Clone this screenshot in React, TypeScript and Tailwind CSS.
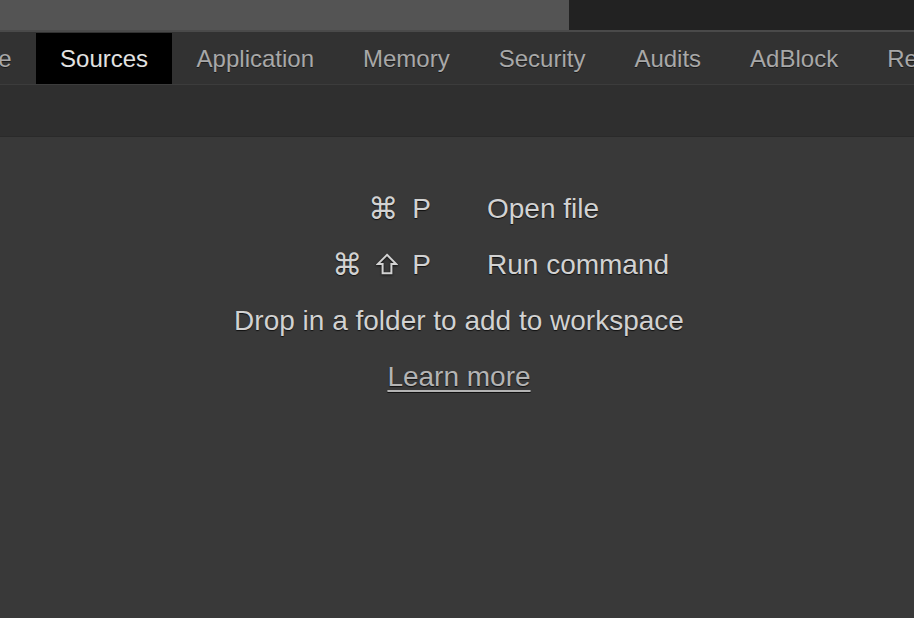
const TABS = ["Console", "Sources", "Application", "Memory", "Security", "Audits", "AdBlock", "Recorder"];

function ShiftIcon() {
  return (
    <svg width="22" height="22" viewBox="0 0 22 22" className="mb-[2px] [filter:drop-shadow(0_1px_1px_#111)]">
      <path
        d="M11 1.8 L20.2 11 H15.4 V20.2 H6.6 V11 H1.8 Z"
        fill="none"
        stroke="currentColor"
        strokeWidth="2"
        strokeLinejoin="miter"
      />
    </svg>
  );
}

function Shortcut({ keys }: { keys: string[] }) {
  return (
    <span className="flex justify-end items-center gap-[14px]">
      {keys.map((k, i) =>
        k === "shift" ? (
          <ShiftIcon key={i} />
        ) : k === "P" ? (
          <span key={i}>{k}</span>
        ) : (
          <span key={i} className="font-['DejaVu_Sans',sans-serif] text-[30px] leading-none">
            {k}
          </span>
        )
      )}
    </span>
  );
}

export default function App() {
  return (
    <div
      className="w-[914px] h-[618px] overflow-hidden flex flex-col bg-[#393939]"
      style={{ fontFamily: '"Liberation Sans", Arial, sans-serif' }}
    >
      {/* window strip */}
      <div className="h-[30px] flex shrink-0">
        <div className="w-[569px] bg-[#545454]" />
        <div className="flex-1 bg-[#222222]" />
      </div>

      {/* tab bar */}
      <div className="h-[55px] shrink-0 border-t-2 border-[#4a4a4a] border-b border-b-[#3c3c3c] bg-[#323232] overflow-hidden text-[24px]">
        <div className="flex h-full -ml-[101px] pt-px">
          {TABS.map((t) => (
            <div
              key={t}
              className={
                t === "Sources"
                  ? "shrink-0 h-full flex items-center px-[24px] bg-black text-[#e2e2e2] [text-shadow:0_1px_0_#000]"
                  : "shrink-0 h-full flex items-center px-[24.5px] text-[#a8a8a8] [text-shadow:0_1px_0_#1a1a1a]"
              }
            >
              {t}
            </div>
          ))}
        </div>
      </div>

      {/* toolbar */}
      <div className="h-[52px] shrink-0 bg-[#2f2f2f] border-b border-[#2a2a2a]" />

      {/* empty editor placeholder */}
      <div className="flex-1 flex flex-col items-center pt-[44px] pl-[4px] text-[28px] text-[#d2d2d2] leading-[56px] [text-shadow:0_1px_1px_#111]">
        <div className="grid grid-cols-2 gap-x-[56px] w-[640px]">
          <Shortcut keys={["⌘", "P"]} />
          <span>Open file</span>
          <Shortcut keys={["⌘", "shift", "P"]} />
          <span>Run command</span>
        </div>
        <div>Drop in a folder to add to workspace</div>
        <a href="#" className="underline text-[#b4b4b4] underline-offset-4">
          Learn more
        </a>
      </div>
    </div>
  );
}
